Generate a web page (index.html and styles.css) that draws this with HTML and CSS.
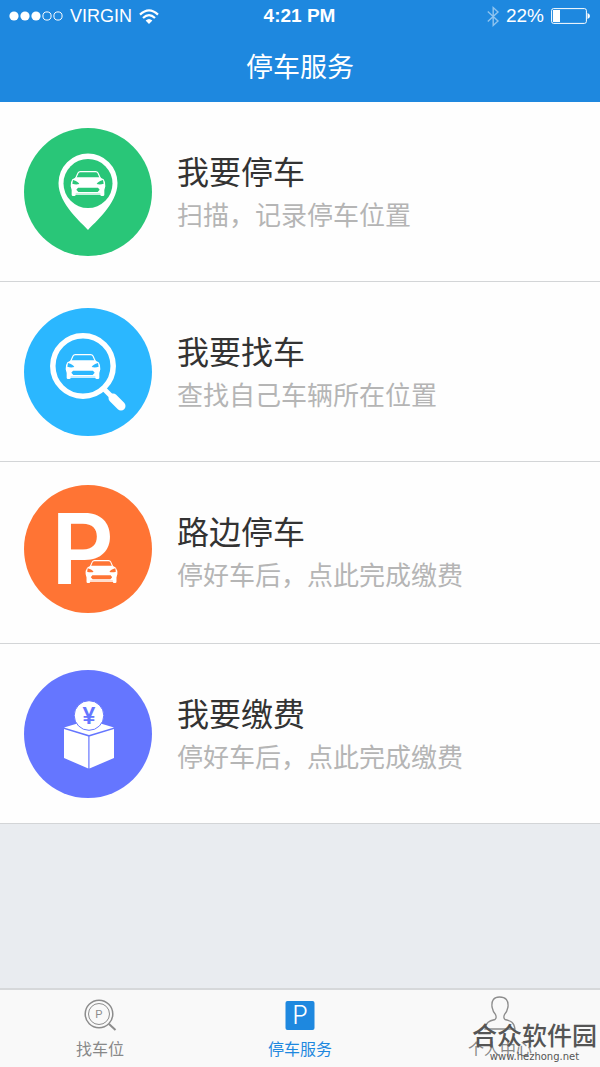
FILE: index.html
```
<!DOCTYPE html>
<html lang="zh-CN">
<head>
    <meta charset="UTF-8">
    <meta name="viewport" content="width=device-width, initial-scale=1">
    <title>停车服务</title>
    <link rel="stylesheet" href="styles.css">
</head>
<body>
<!-- 公用的小车图形 -->
<svg class="defs" aria-hidden="true">
    <symbol id="car" viewBox="0 0 108 75">
        <path d="M17 22 L24 6 Q26 2 31 2 H77 Q82 2 84 6 L91 22" fill="none" stroke="#fff" stroke-width="3.5"/>
        <path fill="#fff" fill-rule="evenodd" d="M18 19 H90 Q97 23 101 25 Q107 33 106 46 L103 57 V71 Q103 75 99 75 H95 Q91 75 91 71 H17 Q17 75 13 75 H9 Q5 75 5 71 V57 L2 46 Q1 33 7 25 Q11 23 18 19 Z M9 27 L7 38 Q17 42 28 39 Q24 31 9 27 Z M99 27 L101 38 Q91 42 80 39 Q84 31 99 27 Z M24 50 L19 56 L25 63 H83 L89 56 L84 50 Z M17 66 V67 H91 V66 Z"/>
    </symbol>
</svg>
<div class="page">
    <header class="header">
        <div class="status">
            <div class="status-left">
                <svg width="54" height="10" viewBox="0 0 54 10">
                    <g fill="#fff"><circle cx="5" cy="5" r="4.6"/><circle cx="16" cy="5" r="4.6"/><circle cx="27" cy="5" r="4.6"/></g>
                    <g fill="none" stroke="#fff"><circle cx="38" cy="5" r="4.1"/><circle cx="49" cy="5" r="4.1"/></g>
                </svg>
                <span class="carrier">VIRGIN</span>
                <svg width="20" height="15" viewBox="0 0 20 15">
                    <path d="M1 5.6 Q10 -2.8 19 5.6" fill="none" stroke="#fff" stroke-width="2.2"/>
                    <path d="M4 9 Q10 3.2 16 9" fill="none" stroke="#fff" stroke-width="2.2"/>
                    <path d="M6.6 11.6 Q10 8.2 13.4 11.6 L10 15 Z" fill="#fff"/>
                </svg>
            </div>
            <span class="time">4:21 PM</span>
            <div class="status-right">
                <svg width="12" height="21" viewBox="0 0 12 21">
                    <path d="M.8 5.5 L11 15 L6.2 19.5 V1.5 L11 6 L.8 15.5" fill="none" stroke="#fff" stroke-opacity=".5" stroke-width="1.4"/>
                </svg>
                <span>22%</span>
                <svg width="39" height="16" viewBox="0 0 39 16">
                    <rect x=".6" y=".6" width="34.8" height="14.8" rx="2" fill="none" stroke="#fff"/>
                    <rect x="2" y="2" width="7" height="12" fill="#fff"/>
                    <path d="M36.5 5 Q39 6 39 8 Q39 10 36.5 11 Z" fill="#fff"/>
                </svg>
            </div>
        </div>
        <h1>停车服务</h1>
    </header>

    <main class="list">
        <a class="item" href="#">
            <svg class="icon" viewBox="0 0 128 128">
                <circle cx="64" cy="64" r="64" fill="#29c678"/>
                <path d="M64 102 C58 95 34.500 76 34.500 55 A29.500 29.500 0 0 1 93.500 55 C93.500 76 70 95 64 102 Z" fill="#fff"/>
                <circle cx="64" cy="55.500" r="24.500" fill="#29c678"/>
                <use href="#car" x="46" y="43" width="36" height="25"/>
            </svg>
            <div class="text">
                <h2>我要停车</h2>
                <p>扫描，记录停车位置</p>
            </div>
        </a>
        <a class="item" href="#">
            <svg class="icon" viewBox="0 0 128 128">
                <circle cx="64" cy="64" r="64" fill="#2bb7ff"/>
                <circle cx="59" cy="58" r="30.200" fill="none" stroke="#fff" stroke-width="5.500"/>
                <path d="M79 80 L88 89" stroke="#fff" stroke-width="5"/>
                <path d="M89 90 L97 98" stroke="#fff" stroke-width="9" stroke-linecap="round"/>
                <use href="#car" x="41" y="46" width="36" height="25"/>
            </svg>
            <div class="text">
                <h2>我要找车</h2>
                <p>查找自己车辆所在位置</p>
            </div>
        </a>
        <a class="item roadside" href="#">
            <svg class="icon" viewBox="0 0 128 128">
                <circle cx="64" cy="64" r="64" fill="#ff7434"/>
                <text class="big-p" x="27" y="99">P</text>
                <use href="#car" x="61" y="75" width="33" height="23"/>
            </svg>
            <div class="text">
                <h2>路边停车</h2>
                <p>停好车后，点此完成缴费</p>
            </div>
        </a>
        <a class="item" href="#">
            <svg class="icon" viewBox="0 0 128 128">
                <circle cx="64" cy="64" r="64" fill="#6576ff"/>
                <path d="M40 57.500 L65 50 L90 57.500 L65 65 Z" fill="#fff"/>
                <path d="M40 59 L64.300 66.500 V98.500 L40 88 Z M90 59 L65.500 66.500 V98.500 L90 88 Z" fill="#fff"/>
                <circle cx="65" cy="45.500" r="14.800" fill="#fff" stroke="#6576ff"/>
                <text class="yen" x="65" y="54">¥</text>
            </svg>
            <div class="text">
                <h2>我要缴费</h2>
                <p>停好车后，点此完成缴费</p>
            </div>
        </a>
    </main>

    <nav class="tabs">
        <a class="tab" href="#">
            <svg width="34" height="34" viewBox="0 0 34 34">
                <g fill="none" stroke="#8c8c8c">
                    <circle cx="16" cy="17" r="13.800" stroke-width="1.500"/>
                    <circle cx="16" cy="17" r="10.500"/>
                    <path d="M26 27 L32.500 33" stroke-width="2"/>
                </g>
                <text class="small-p" x="16" y="21">P</text>
            </svg>
            <span>找车位</span>
        </a>
        <a class="tab active" href="#">
            <svg width="34" height="34" viewBox="0 0 34 34">
                <rect x="2.500" y="4" width="29" height="29" rx="2" fill="#1e88df"/>
                <text class="thin-p" x="17" y="27">P</text>
            </svg>
            <span>停车服务</span>
        </a>
        <a class="tab" href="#">
            <svg width="34" height="34" viewBox="0 0 34 34">
                <path d="M2 32 C3 25 6 24 12 22.500 Q14 21 12.500 17.500 Q10 15 9 10 Q8 0 16.500 0 Q26 0 25 10 Q24 15 21.500 17.500 Q20 21 22 22.500 C28 24 31 25 32 32 Z" fill="none" stroke="#8c8c8c" stroke-width="1.300"/>
            </svg>
            <span>个人中心</span>
        </a>
        <div class="mark">
            <b>合众软件园</b>
            <small>www.hezhong.net</small>
        </div>
    </nav>
</div>
</body>
</html>
```

FILE: styles.css
```
*{
    margin: 0;
    padding: 0;
    box-sizing: border-box;
}
body{
    font-family: "Liberation Sans", "Noto Sans CJK SC", sans-serif;
    background: #e9ecf0;
}
a{
    color: inherit;
    text-decoration: none;
}
svg{
    display: block;
    flex: none;
    overflow: visible;
}
.defs{
    position: absolute;
    width: 0;
    height: 0;
}
.page{
    min-height: 100vh;
    display: flex;
    flex-direction: column;
}

/* 顶部 */
.header{
    height: 102px;
    background: #1e88df;
    color: #fff;
}
.status{
    display: grid;
    grid-template-columns: 1fr auto 1fr;
    align-items: center;
    height: 32px;
    padding: 0 10px 0 9px;
    font-size: 19px;
    line-height: 32px;
}
.status-left,.status-right{
    display: flex;
    align-items: center;
    gap: 7px;
}
.status-right{
    justify-content: flex-end;
}
.carrier{
    font-size: 18px;
}
.time{
    font-weight: bold;
}
.header h1{
    font-size: 27px;
    font-weight: normal;
    line-height: 72px;
    text-align: center;
}

/* 服务列表 */
.list{
    flex: 1;
}
.item{
    display: flex;
    gap: 25px;
    min-height: 180px;
    padding: 26px 24px 25px;
    background: #fefefe;
    border-bottom: 1px solid #d3d5d7;
}
.roadside{
    min-height: 182px;
    padding: 23px 24px;
}
.icon{
    width: 128px;
    height: 128px;
}
.text{
    align-self: center;
    padding-top: 3px;
}
.text h2{
    color: #333;
    font-size: 32px;
    font-weight: normal;
    line-height: 44px;
}
.text p{
    color: #b5b5b5;
    font-size: 26px;
    line-height: 42px;
}
.big-p{
    fill: #fff;
    font-family: Inter, sans-serif;
    font-size: 98px;
    font-weight: 600;
}
.yen{
    fill: #6576ff;
    font-size: 23px;
    font-weight: bold;
    text-anchor: middle;
}

/* 底部导航 */
.tabs{
    position: relative;
    display: grid;
    grid-template-columns: repeat(3, 1fr);
    height: 79px;
    padding-top: 7px;
    background: #f9f9f9;
    border-top: 2px solid #d6d8da;
}
.tab{
    display: flex;
    flex-direction: column;
    align-items: center;
    gap: 8px;
    color: #888;
    font-size: 16px;
    line-height: 22px;
}
.active{
    color: #1e88df;
}
.small-p{
    fill: #8c8c8c;
    font-size: 11px;
    text-anchor: middle;
}
.thin-p{
    fill: #fff;
    font-family: Inter, sans-serif;
    font-size: 25px;
    font-weight: 300;
    text-anchor: middle;
}
.mark{
    position: absolute;
    right: 3px;
    bottom: 4px;
    color: #555;
    text-align: center;
}
.mark b{
    display: block;
    font-size: 25px;
    font-weight: 500;
    line-height: 30px;
}
.mark small{
    display: block;
    font-family: "DejaVu Sans", sans-serif;
    font-size: 10px;
    line-height: 12px;
}
```
